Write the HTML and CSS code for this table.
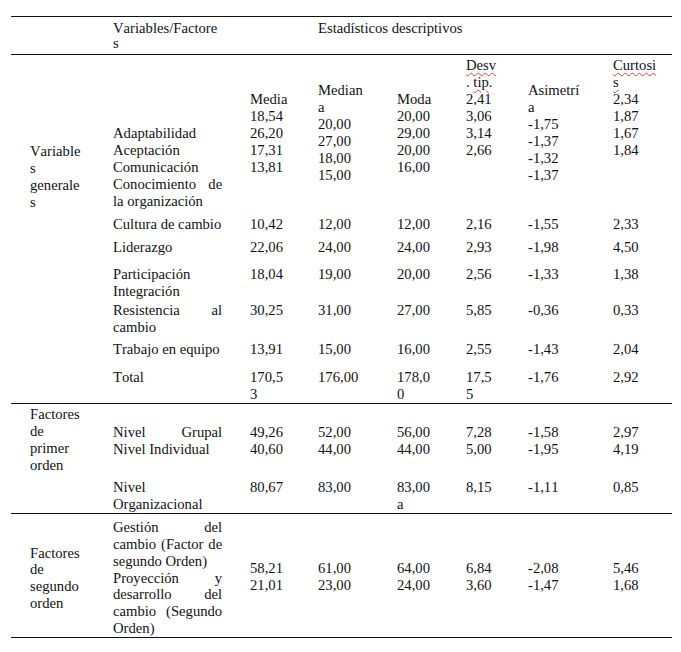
FILE: index.html
```html
<!DOCTYPE html>
<html lang="es">
<head>
<meta charset="utf-8">
<title>Estadísticos descriptivos</title>
<link rel="stylesheet" href="styles.css">
</head>
<body>
<table class="stats">
  <colgroup>
    <col class="w-c1"><col class="w-c2"><col class="w-media"><col class="w-median"><col class="w-moda"><col class="w-desv"><col class="w-asim"><col class="w-curt">
  </colgroup>
  <tr class="r-head">
    <td class="c1"></td>
    <td class="c2">Variables/&#8288;Factores</td>
    <td class="media"></td>
    <td class="median" colspan="5">Estadísticos descriptivos</td>
  </tr>
  <tr class="r-gen">
    <td class="c1 lbl-gen" rowspan="7">Variables generales</td>
    <td class="c2 pt-c2">Adaptabilidad<br>Aceptación<br>Comunicación<br>Conocimiento de la organización</td>
    <td class="media pt-low">Media<br>18,54<br>26,20<br>17,31<br>13,81</td>
    <td class="median pt-mid">Mediana<br>20,00<br>27,00<br>18,00<br>15,00</td>
    <td class="moda pt-low">Moda<br>20,00<br>29,00<br>20,00<br>16,00</td>
    <td class="desv pt-top"><span class="sp">Desv</span>. <span class="sp">tip</span>.<br>2,41<br>3,06<br>3,14<br>2,66</td>
    <td class="asim pt-mid">Asimetría<br>-1,75<br>-1,37<br>-1,32<br>-1,37</td>
    <td class="curt pt-top"><span class="sp">Curtosis</span><br>2,34<br>1,87<br>1,67<br>1,84</td>
  </tr>
  <tr class="r-cult">
    <td class="c2">Cultura de cambio</td>
    <td class="media">10,42</td><td class="median">12,00</td><td class="moda">12,00</td><td class="desv">2,16</td><td class="asim">-1,55</td><td class="curt">2,33</td>
  </tr>
  <tr class="r-lid">
    <td class="c2">Liderazgo</td>
    <td class="media">22,06</td><td class="median">24,00</td><td class="moda">24,00</td><td class="desv">2,93</td><td class="asim">-1,98</td><td class="curt">4,50</td>
  </tr>
  <tr class="r-part">
    <td class="c2">Participación Integración</td>
    <td class="media">18,04</td><td class="median">19,00</td><td class="moda">20,00</td><td class="desv">2,56</td><td class="asim">-1,33</td><td class="curt">1,38</td>
  </tr>
  <tr class="r-res">
    <td class="c2">Resistencia al cambio</td>
    <td class="media">30,25</td><td class="median">31,00</td><td class="moda">27,00</td><td class="desv">5,85</td><td class="asim">-0,36</td><td class="curt">0,33</td>
  </tr>
  <tr class="r-trab">
    <td class="c2">Trabajo en equipo</td>
    <td class="media">13,91</td><td class="median">15,00</td><td class="moda">16,00</td><td class="desv">2,55</td><td class="asim">-1,43</td><td class="curt">2,04</td>
  </tr>
  <tr class="r-total">
    <td class="c2">Total</td>
    <td class="media">170,53</td><td class="median">176,00</td><td class="moda">178,00</td><td class="desv">17,55</td><td class="asim">-1,76</td><td class="curt">2,92</td>
  </tr>
  <tr class="r-prim-a sep">
    <td class="c1 lbl-prim" rowspan="2">Factores de primer orden</td>
    <td class="c2">Nivel Grupal Nivel Individual</td>
    <td class="media">49,26<br>40,60</td><td class="median">52,00<br>44,00</td><td class="moda">56,00<br>44,00</td><td class="desv">7,28<br>5,00</td><td class="asim">-1,58<br>-1,95</td><td class="curt">2,97<br>4,19</td>
  </tr>
  <tr class="r-prim-b">
    <td class="c2">Nivel Organizacional</td>
    <td class="media">80,67</td><td class="median">83,00</td><td class="moda">83,00a</td><td class="desv">8,15</td><td class="asim">-1,11</td><td class="curt">0,85</td>
  </tr>
  <tr class="r-seg sep last">
    <td class="c1">Factores de segundo orden</td>
    <td class="c2"><div>Gestión del cambio (Factor de segundo Orden)</div><div>Proyección y desarrollo del cambio (Segundo Orden)</div></td>
    <td class="media num-seg">58,21<br>21,01</td><td class="median num-seg">61,00<br>23,00</td><td class="moda num-seg">64,00<br>24,00</td><td class="desv num-seg">6,84<br>3,60</td><td class="asim num-seg">-2,08<br>-1,47</td><td class="curt num-seg">5,46<br>1,68</td>
  </tr>
</table>
</body>
</html>
```

FILE: styles.css
```css
html, body {
  margin: 0;
  padding: 0;
  background: #ffffff;
}

body {
  color: #111111;
  font-family: "Liberation Serif", Tinos, "Times New Roman", Times, serif;
  font-size: 14.67px;
  line-height: 17px;
  font-kerning: none;
  font-variant-ligatures: none;
}

.stats {
  margin: 16px 0 0 11px;
  width: 661px;
  table-layout: fixed;
  border-collapse: separate;
  border-spacing: 0;
}

.w-c1 { width: 102px; }
.w-c2 { width: 137px; }
.w-media { width: 68px; }
.w-median { width: 79px; }
.w-moda { width: 69px; }
.w-desv { width: 62px; }
.w-asim { width: 85px; }
.w-curt { width: 59px; }

.stats td {
  box-sizing: border-box;
  vertical-align: top;
  padding: 0;
  overflow-wrap: anywhere;
  text-align: left;
}

.stats td.c1 { padding-left: 19px; padding-right: 30px; }
.stats td.c2 { padding-right: 27.8px; text-align: justify; }
.stats td.media { padding-right: 29px; }
.stats td.median { padding-right: 31px; }
.stats td.moda { padding-right: 33px; }
.stats td.desv { padding-right: 30.5px; }
.stats td.asim { padding-right: 30.5px; }
.stats td.curt { padding-right: 13px; }

/* header row */
.r-head td {
  border-top: 1px solid #111111;
  border-bottom: 1px solid #111111;
  line-height: 15px;
  padding-top: 3.5px;
  padding-bottom: 3px;
}

/* first block: variables generales */
.r-gen td.lbl-gen { padding-top: 88px; }
.r-gen td.pt-c2 { padding-top: 70px; }
.r-gen td.pt-low { padding-top: 36.5px; }
.r-gen td.pt-mid { padding-top: 27px; }
.r-gen td.pt-top { padding-top: 2.5px; }

.r-cult td { padding-top: 6px; }
.r-lid td { padding-top: 6px; }
.r-part td { padding-top: 10px; }
.r-res td { padding-top: 2.5px; }
.r-trab td { padding-top: 5px; }
.r-total td { padding-top: 10.5px; padding-bottom: 0; }

.sep td { border-top: 1px solid #111111; }

/* factores de primer orden */
.r-prim-a td { padding-top: 20.8px; padding-bottom: 21px; }
.r-prim-a td.lbl-prim { padding-top: 2.5px; padding-bottom: 0; }
.r-prim-b td { padding-top: 0; padding-bottom: 0.2px; }

/* factores de segundo orden */
.r-seg td {
  vertical-align: middle;
  line-height: 16.7px;
  padding-top: 5px;
  padding-bottom: 0.8px;
  border-bottom: 1px solid #111111;
}
.r-seg td.num-seg { padding-bottom: 3.5px; }

.sp {
  text-decoration-line: underline;
  text-decoration-style: wavy;
  text-decoration-color: #e0403a;
  text-decoration-thickness: 1px;
  text-underline-offset: 2px;
}
```
